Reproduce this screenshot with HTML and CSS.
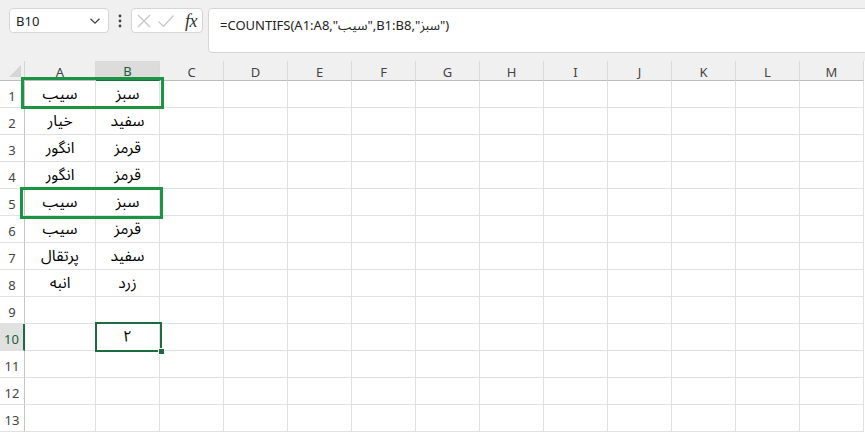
FILE: index.html
```html
<!DOCTYPE html>
<html lang="fa">
<head>
<meta charset="utf-8">
<link rel="stylesheet" href="styles.css">
</head>
<body>
<div class="toolbar">
  <div class="namebox">
    <span class="ref">B10</span>
    <svg class="chev" width="12" height="8" viewBox="0 0 12 8"><path d="M1.5 1.8 L6 6.2 L10.5 1.8" fill="none" stroke="#444" stroke-width="1.3"/></svg>
  </div>
  <div class="dots">
    <svg width="4" height="14" viewBox="0 0 4 14"><circle cx="2" cy="2" r="1.4" fill="#444"/><circle cx="2" cy="7" r="1.4" fill="#444"/><circle cx="2" cy="12" r="1.4" fill="#444"/></svg>
  </div>
  <div class="fxgroup">
    <svg class="ico" width="16" height="16" viewBox="0 0 16 16"><path d="M2 2 L14 14 M14 2 L2 14" stroke="#c4c4c4" stroke-width="1.2" fill="none"/></svg>
    <svg class="ico" width="18" height="16" viewBox="0 0 18 16"><path d="M1.5 8.5 L6.5 13.5 L16.5 2.5" stroke="#c4c4c4" stroke-width="1.2" fill="none"/></svg>
    <span class="fx">fx</span>
  </div>
  <div class="formula" dir="ltr">=COUNTIFS(A1:A8,"سیب",B1:B8,"سبز")</div>
</div>
<div class="sheet">
  <div class="corner"><svg width="12" height="12" viewBox="0 0 12 12"><polygon points="12,0 12,12 0,12" fill="#d6d6d6"/></svg></div>
  <div class="ch">A</div><div class="ch sel">B</div><div class="ch">C</div><div class="ch">D</div><div class="ch">E</div><div class="ch">F</div><div class="ch">G</div><div class="ch">H</div><div class="ch">I</div><div class="ch">J</div><div class="ch">K</div><div class="ch">L</div><div class="ch">M</div>

  <div class="rh">1</div><div class="c">سیب</div><div class="c">سبز</div><div class="c"></div><div class="c"></div><div class="c"></div><div class="c"></div><div class="c"></div><div class="c"></div><div class="c"></div><div class="c"></div><div class="c"></div><div class="c"></div><div class="c"></div>
  <div class="rh">2</div><div class="c">خیار</div><div class="c">سفید</div><div class="c"></div><div class="c"></div><div class="c"></div><div class="c"></div><div class="c"></div><div class="c"></div><div class="c"></div><div class="c"></div><div class="c"></div><div class="c"></div><div class="c"></div>
  <div class="rh">3</div><div class="c">انگور</div><div class="c">قرمز</div><div class="c"></div><div class="c"></div><div class="c"></div><div class="c"></div><div class="c"></div><div class="c"></div><div class="c"></div><div class="c"></div><div class="c"></div><div class="c"></div><div class="c"></div>
  <div class="rh">4</div><div class="c">انگور</div><div class="c">قرمز</div><div class="c"></div><div class="c"></div><div class="c"></div><div class="c"></div><div class="c"></div><div class="c"></div><div class="c"></div><div class="c"></div><div class="c"></div><div class="c"></div><div class="c"></div>
  <div class="rh">5</div><div class="c">سیب</div><div class="c">سبز</div><div class="c"></div><div class="c"></div><div class="c"></div><div class="c"></div><div class="c"></div><div class="c"></div><div class="c"></div><div class="c"></div><div class="c"></div><div class="c"></div><div class="c"></div>
  <div class="rh">6</div><div class="c">سیب</div><div class="c">قرمز</div><div class="c"></div><div class="c"></div><div class="c"></div><div class="c"></div><div class="c"></div><div class="c"></div><div class="c"></div><div class="c"></div><div class="c"></div><div class="c"></div><div class="c"></div>
  <div class="rh">7</div><div class="c">پرتقال</div><div class="c">سفید</div><div class="c"></div><div class="c"></div><div class="c"></div><div class="c"></div><div class="c"></div><div class="c"></div><div class="c"></div><div class="c"></div><div class="c"></div><div class="c"></div><div class="c"></div>
  <div class="rh">8</div><div class="c">انبه</div><div class="c">زرد</div><div class="c"></div><div class="c"></div><div class="c"></div><div class="c"></div><div class="c"></div><div class="c"></div><div class="c"></div><div class="c"></div><div class="c"></div><div class="c"></div><div class="c"></div>
  <div class="rh">9</div><div class="c"></div><div class="c"></div><div class="c"></div><div class="c"></div><div class="c"></div><div class="c"></div><div class="c"></div><div class="c"></div><div class="c"></div><div class="c"></div><div class="c"></div><div class="c"></div><div class="c"></div>
  <div class="rh sel">10</div><div class="c"></div><div class="c">۲</div><div class="c"></div><div class="c"></div><div class="c"></div><div class="c"></div><div class="c"></div><div class="c"></div><div class="c"></div><div class="c"></div><div class="c"></div><div class="c"></div><div class="c"></div>
  <div class="rh">11</div><div class="c"></div><div class="c"></div><div class="c"></div><div class="c"></div><div class="c"></div><div class="c"></div><div class="c"></div><div class="c"></div><div class="c"></div><div class="c"></div><div class="c"></div><div class="c"></div><div class="c"></div>
  <div class="rh">12</div><div class="c"></div><div class="c"></div><div class="c"></div><div class="c"></div><div class="c"></div><div class="c"></div><div class="c"></div><div class="c"></div><div class="c"></div><div class="c"></div><div class="c"></div><div class="c"></div><div class="c"></div>
  <div class="rh">13</div><div class="c"></div><div class="c"></div><div class="c"></div><div class="c"></div><div class="c"></div><div class="c"></div><div class="c"></div><div class="c"></div><div class="c"></div><div class="c"></div><div class="c"></div><div class="c"></div><div class="c"></div>

  <div class="mark mark1"></div>
  <div class="mark mark5"></div>
  <div class="active"><span class="handle"></span></div>
</div>
</body>
</html>
```

FILE: styles.css
```css
* { box-sizing: border-box; }
html, body { margin: 0; padding: 0; }
body {
  width: 865px;
  height: 432px;
  overflow: hidden;
  background: #ffffff;
  font-family: "Noto Sans", "Open Sans", "Noto Sans Arabic", "DejaVu Sans", sans-serif;
  color: #222;
}

.toolbar {
  height: 61px;
  background: #f0f0f0;
  display: flex;
  align-items: flex-start;
  padding: 8px 0 0 9px;
}
.namebox {
  width: 100px;
  height: 25px;
  background: #fff;
  border: 1px solid #d6d6d6;
  border-radius: 4px;
  display: flex;
  align-items: center;
  justify-content: space-between;
  padding: 0 7px 0 6px;
  font-size: 13px;
  color: #222;
}
.namebox .chev { margin-top: 1px; }
.dots {
  width: 22px;
  height: 25px;
  display: flex;
  align-items: center;
  justify-content: center;
}
.fxgroup {
  width: 72px;
  height: 25px;
  background: #fff;
  border: 1px solid #d6d6d6;
  border-radius: 4px;
  display: flex;
  align-items: center;
  padding: 0 0 0 4px;
  gap: 5px;
}
.fxgroup .ico { flex: none; }
.fx {
  font-family: "Liberation Serif", "DejaVu Serif", serif;
  font-style: italic;
  font-size: 18px;
  line-height: 20px;
  color: #333;
  margin-left: 5px;
  letter-spacing: -0.5px;
}
.formula {
  flex: 1;
  margin-left: 5px;
  margin-right: -4px;
  height: 45px;
  background: #fff;
  border: 1px solid #d6d6d6;
  border-radius: 4px 0 0 4px;
  padding: 3px 0 0 11px;
  font-size: 13px;
  color: #222;
  unicode-bidi: plaintext;
  text-align: left;
}

.sheet {
  position: relative;
  display: grid;
  grid-template-columns: 25px 71px 64px repeat(11, 64px);
  grid-template-rows: 20px repeat(13, 27px);
  background: #fff;
}
.corner {
  background: #f0f0f0;
  border-right: 1px solid #d4d4d4;
  border-bottom: 1px solid #bdbdbd;
  display: flex;
  align-items: flex-end;
  justify-content: flex-end;
  padding: 0 3px 3px 0;
}
.ch {
  background: #f0f0f0;
  border-right: 1px solid #dadada;
  border-bottom: 1px solid #bdbdbd;
  font-size: 13px;
  line-height: 16px;
  color: #444;
  display: flex;
  align-items: center;
  justify-content: center;
  padding-top: 2px;
}
.ch.sel {
  background: #dcdcdc;
  border-bottom: 2px solid #1d6b41;
  color: #1b5e38;
}
.rh {
  background: #fff;
  border-right: 1px solid #c6c6c6;
  border-bottom: 1px solid #e1e1e1;
  font-size: 13px;
  line-height: 16px;
  color: #444;
  display: flex;
  align-items: center;
  justify-content: center;
  padding-top: 4px;
}
.rh.sel {
  background: #e1e1e1;
  border-right: 2px solid #1d6b41;
  color: #1b5e38;
}
.c {
  border-right: 1px solid #e1e1e1;
  border-bottom: 1px solid #e1e1e1;
  font-family: "Noto Sans Arabic", "DejaVu Sans", "Noto Sans", sans-serif;
  font-size: 15.5px;
  line-height: 18px;
  color: #000;
  display: flex;
  align-items: center;
  justify-content: center;
  direction: rtl;
}

.mark {
  position: absolute;
  border: 3px solid #1b9444;
  pointer-events: none;
}
.mark1 { left: 21px; top: 16px; width: 143px; height: 32px; }
.mark5 { left: 20px; top: 126px; width: 143px; height: 32px; }

.active {
  position: absolute;
  left: 95px;
  top: 261px;
  width: 67px;
  height: 30px;
  border: 2px solid #1d6b41;
}
.handle {
  position: absolute;
  right: -5px;
  bottom: -5px;
  width: 7px;
  height: 7px;
  background: #1d6b41;
  border: 1px solid #fff;
}
```
